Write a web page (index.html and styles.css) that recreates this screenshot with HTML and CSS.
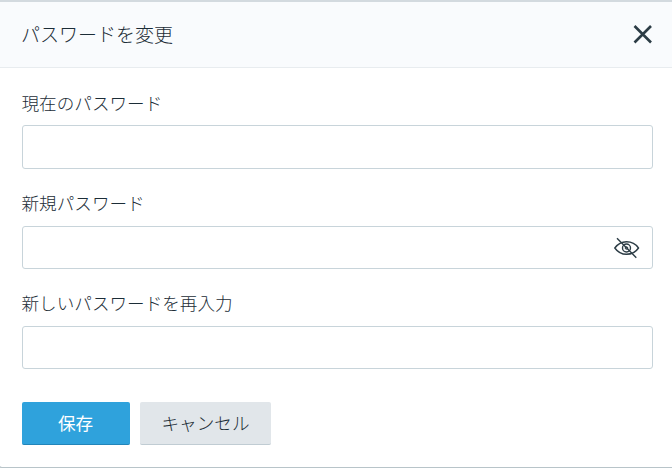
FILE: index.html
```html
<!DOCTYPE html>
<html lang="ja">
<head>
<meta charset="utf-8">
<title>パスワードを変更</title>
<link rel="stylesheet" href="styles.css">
</head>
<body>
<form class="dialog">
  <header class="header">
    <h1 class="title">パスワードを変更</h1>
    <button class="close" type="button" aria-label="閉じる">
      <svg width="20" height="20" viewBox="0 0 20 20"><path d="M1.500 2 18 18.500M18 2 1.500 18.500" fill="none" stroke="#2c3c45" stroke-width="2.600"/></svg>
    </button>
  </header>
  <div class="body">
    <label class="label" for="current">現在のパスワード</label>
    <div class="field"><input class="input" id="current" type="password"></div>
    <label class="label" for="new">新規パスワード</label>
    <div class="field">
      <input class="input" id="new" type="password">
      <svg class="eye" width="26" height="22" viewBox="0 0 26 22" fill="none" stroke="#2c3c45" stroke-width="1.4"><path d="M.8 11C4 6.500 8.200 4.700 12.500 4.700S21.500 6.500 24.500 11c-3 4.500-7.500 6.300-12 6.300S4 15.500 .8 11ZM3 1.300 22.300 20.700"/><circle cx="12.500" cy="11" r="4"/><circle cx="12.500" cy="11" r="1.300" stroke-width="1"/></svg>
    </div>
    <label class="label" for="again">新しいパスワードを再入力</label>
    <div class="field"><input class="input" id="again" type="password"></div>
    <div class="actions">
      <button class="button primary" type="button">保存</button>
      <button class="button secondary" type="button">キャンセル</button>
    </div>
  </div>
</form>
</body>
</html>
```
FILE: styles.css
```css
* { box-sizing: border-box; }
body { margin: 0; background: #c5cdd1; color: #1c2d37; font-family: "Noto Sans CJK JP", sans-serif; }
.dialog { height: 468px; background: #fff; background-clip: padding-box; border-top: 2px solid #d3dadf; border-bottom: 1px solid #b8c4c9; border-bottom-left-radius: 2px; }
.header { display: flex; align-items: center; justify-content: space-between; height: 66px; padding: 0 19px 2px 21px; background: #f9fbfd; border-bottom: 1px solid #e8ecef; }
.title { margin: 0; font-size: 19px; font-weight: 300; }
.close { display: flex; padding: 0; border: 0; background: none; }
.body { padding: 21px 19px 0 22px; }
.label { display: block; height: 36px; font-size: 17.6px; font-weight: 300; line-height: 27px; text-indent: -0.5px; }
.field + .label { line-height: 25px; }
.field { display: flex; align-items: center; height: 44px; margin-bottom: 21px; padding-right: 12px; border: 1px solid #c8d4da; border-radius: 3px; }
.field + .label + .field { height: 43px; }
.input { flex: 1; height: 100%; border: 0; outline: 0; background: none; }
.actions { display: flex; gap: 10px; padding-top: 12px; }
.button { height: 43px; padding: 0 0 1px; border: 0; border-radius: 2px; font-family: inherit; font-size: 17.6px; font-weight: 300; }
.primary { width: 108px; padding-right: 1px; color: #fff; background: #2fa2dc; border-bottom: 1px solid #2285b9; font-weight: 400; }
.secondary { width: 131px; color: #1c2d37; background: #e1e6ea; border-bottom: 1px solid #c0ccd3; }
```
